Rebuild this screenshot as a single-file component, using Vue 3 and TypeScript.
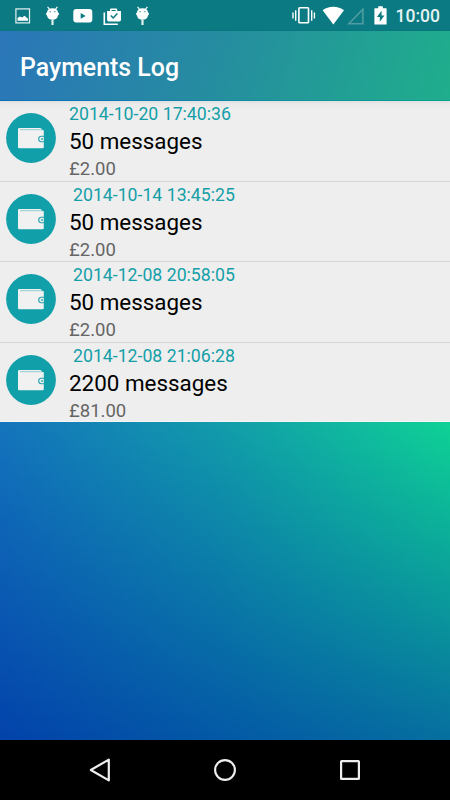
<script setup lang="ts">
interface Payment {
  date: string
  amount: string
  price: string
  indented: boolean
}

const payments: Payment[] = [
  { date: '2014-10-20 17:40:36', amount: '50 messages', price: '£2.00', indented: false },
  { date: '2014-10-14 13:45:25', amount: '50 messages', price: '£2.00', indented: true },
  { date: '2014-12-08 20:58:05', amount: '50 messages', price: '£2.00', indented: true },
  { date: '2014-12-08 21:06:28', amount: '2200 messages', price: '£81.00', indented: true },
]
</script>

<template>
  <div class="screen">
    <header class="status">
      <div class="notifications">
        <svg class="icon-photo" width="16" height="16" viewBox="0 0 16 16">
          <rect x=".9" y=".9" width="13.6" height="14" fill="none" stroke="#e4f1f1" stroke-width="1.2" />
          <path d="M2.5 12.8V10l2.4-1.6 2.2 1.2 2.3-1.8 3.6 3v2z" fill="#fff" />
        </svg>
        <svg class="icon-bug" width="16" height="20" viewBox="0 0 16 20">
          <path d="M2.6.8l2.1 2.7M12.4.8l-2.1 2.7" stroke="#fff" stroke-width="1.2" />
          <path d="M2 6.2Q2.6 2.3 7.5 2.3T13 6.2L14.2 8 13 9.4Q12.2 13.8 7.5 13.8T2 9.4L.8 8z" fill="#fff" />
          <circle cx="5.1" cy="5.7" r=".6" fill="#0c7a82" /><circle cx="9.9" cy="5.7" r=".6" fill="#0c7a82" />
          <rect x="6.4" y="13.6" width="2.2" height="5.4" fill="#e2f0f0" />
        </svg>
        <svg class="icon-video" width="20" height="16" viewBox="0 0 20 16">
          <rect x=".3" y=".9" width="19" height="13.6" rx="3" fill="#fff" />
          <path d="M7.7 5v5.8l5-2.9z" fill="#0c7a82" />
        </svg>
        <svg class="icon-store" width="20" height="18" viewBox="0 0 20 18">
          <path d="M1.3 4.5v11.8h13.5" fill="none" stroke="#fff" stroke-width="1.6" />
          <path d="M4.1 3.1H7V1.4Q7 .5 8 .5h5.2q1 0 1 .9v1.7H18v8.7q0 1.6-1.6 1.6H5.7q-1.6 0-1.6-1.6zM8.5 3.1h4.2V1.9H8.5z" fill="#fff" fill-rule="evenodd" />
          <path d="M7.8 7.5l2.4 2.5L14.4 5.6" fill="none" stroke="#0c7a82" stroke-width="1.5" />
        </svg>
        <svg class="icon-bug" width="16" height="20" viewBox="0 0 16 20">
          <path d="M2.6.8l2.1 2.7M12.4.8l-2.1 2.7" stroke="#fff" stroke-width="1.2" />
          <path d="M2 6.2Q2.6 2.3 7.5 2.3T13 6.2L14.2 8 13 9.4Q12.2 13.8 7.5 13.8T2 9.4L.8 8z" fill="#fff" />
          <circle cx="5.1" cy="5.7" r=".6" fill="#0c7a82" /><circle cx="9.9" cy="5.7" r=".6" fill="#0c7a82" />
          <rect x="6.4" y="13.6" width="2.2" height="5.4" fill="#e2f0f0" />
        </svg>
      </div>
      <div class="system">
        <svg width="24" height="20" viewBox="0 0 24 20">
          <rect x="6.9" y="2.8" width="9.6" height="15" rx=".8" fill="none" stroke="#fff" stroke-width="1.6" />
          <path d="M3.7 5.3v10.4M1 7.5v6M19.7 5.3v10.4M22.4 7.5v6" stroke="#fff" stroke-width="1.4" />
        </svg>
        <svg class="icon-wifi" width="24" height="20" viewBox="0 0 24 20">
          <path d="M.6 5.3Q5 1.8 11.3 1.8T22 5.3L11.3 19.4z" fill="#fff" />
        </svg>
        <svg class="icon-signal" width="18" height="20" viewBox="0 0 18 20">
          <path d="M1.8 18.7H15.9V4.2z" fill="none" stroke="#4f9da2" stroke-width="1.6" />
        </svg>
        <svg class="icon-battery" width="14" height="20" viewBox="0 0 14 20">
          <path d="M1 3.2h3.2V1.3h4.6v1.9H12q.6 0 .6.6v15.2q0 .6-.6.6H1q-.6 0-.6-.6V3.8q0-.6.6-.6z" fill="#fff" />
          <path d="M7.6 5.7L2.9 12h2.9v4.8l4.7-6.4H7.6z" fill="#0c7a82" />
        </svg>
        <span class="clock">10:00</span>
      </div>
    </header>

    <div class="toolbar"><h1>Payments Log</h1></div>

    <main class="content">
      <ul class="list">
        <li v-for="payment in payments" :key="payment.date" class="row">
          <svg class="wallet" width="50" height="50" viewBox="0 0 50 50">
            <circle cx="25" cy="25" r="24.9" fill="#119fa9" />
            <path d="M12 16.2q0-1.2 1.2-1.2H34q1.8 0 1.8 1.8l2 .5V34q0 1.2-1.2 1.2H13.2Q12 35.2 12 34z" fill="#f1f1f1" />
            <path d="M14 16.7h20.5q1 0 1 .8" fill="none" stroke="#79c4c8" stroke-width=".8" />
            <path d="M38 23.3h-2.6a2.7 2.7 0 0 0 0 5.4H38" fill="none" stroke="#25a4ac" stroke-width="1.1" />
            <circle cx="36" cy="26" r=".9" fill="#25a4ac" />
          </svg>
          <div class="details">
            <div class="date" :class="{ indented: payment.indented }">{{ payment.date }}</div>
            <div class="amount">{{ payment.amount }}</div>
            <div class="price">{{ payment.price }}</div>
          </div>
        </li>
      </ul>
      <div class="backdrop"></div>
    </main>

    <nav class="navbar">
      <svg width="24" height="26" viewBox="0 0 24 26">
        <path d="M2.8 13L20.8 2.6v20.8z" fill="none" stroke="#eee" stroke-width="2.2" stroke-linejoin="round" />
      </svg>
      <svg width="24" height="26" viewBox="0 0 24 26">
        <circle cx="12" cy="13" r="9.9" fill="none" stroke="#eee" stroke-width="2.1" />
      </svg>
      <svg width="24" height="26" viewBox="0 0 24 26">
        <rect x="3.1" y="4.1" width="17.8" height="17.8" rx=".5" fill="none" stroke="#eee" stroke-width="2.2" />
      </svg>
    </nav>
  </div>
</template>

<style>
body {
  margin: 0;
}
</style>

<style scoped>
.screen {
  width: 450px;
  height: 800px;
  display: flex;
  flex-direction: column;
  overflow: hidden;
  font-family: Roboto, sans-serif;
}
svg {
  display: block;
  flex: none;
}
.status {
  height: 31px;
  flex: none;
  box-sizing: border-box;
  display: flex;
  justify-content: space-between;
  background: linear-gradient(#0c7a82 29px, #08777c);
}
.notifications {
  display: flex;
  align-items: flex-start;
  padding: 6px 0 0 14.5px;
}
.icon-photo {
  margin-top: 2px;
}
.icon-bug {
  margin-left: 14.5px;
}
.icon-video {
  margin: 2px 0 0 12px;
}
.icon-store {
  margin: 2px -3px 0 10px;
}
.system {
  display: flex;
  align-items: flex-start;
  padding: 5px 10px 0 0;
}
.icon-wifi {
  margin-left: 6px;
}
.icon-signal {
  margin-left: 1px;
}
.icon-battery {
  margin: 0 8px 0 9px;
}
.clock {
  font-size: 17.5px;
  font-weight: 500;
  line-height: 23px;
  color: #e4f2f2;
}
.toolbar {
  height: 70px;
  flex: none;
  box-sizing: border-box;
  display: flex;
  align-items: center;
  padding: 5px 20px 0;
  background: linear-gradient(105deg, #2b76b9, #258e9f 50%, #1fae8c);
  border-bottom: 1px solid #147bb4;
  border-image: linear-gradient(90deg, #0b6db9, #108aaa 50%, #0aa191) 1;
}
h1 {
  margin: 0;
  font-size: 24.9px;
  font-weight: 500;
  line-height: 30px;
  color: #fff;
}
.content {
  flex: 1;
  display: flex;
  flex-direction: column;
}
.list {
  height: 321px;
  flex: none;
  margin: 0;
  padding: 0;
  list-style: none;
  display: grid;
  grid-template-rows: 81px 80px 81px 79px;
  background: linear-gradient(#dfdfdf, #eaeaea 3px, #eee 9px);
}
.row {
  display: flex;
  box-sizing: border-box;
  min-height: 0;
  border-bottom: 1px solid #d5d5d5;
}
.row:last-child {
  border-bottom-color: #f4f6f6;
}
.wallet {
  margin: 12.4px 13px 0 6px;
}
.details {
  white-space: nowrap;
}
.date {
  font-size: 17.7px;
  line-height: 26px;
  color: #149fa8;
}
.date.indented {
  padding-left: 4px;
}
.amount {
  font-size: 22.4px;
  line-height: 29px;
  color: #000;
}
.price {
  font-size: 18.5px;
  line-height: 26px;
  color: #656565;
}
.backdrop {
  flex: 1;
  position: relative;
  background: linear-gradient(90deg, #0343ab, #0459a6 50%, #076fa0);
}
.backdrop::before {
  content: '';
  position: absolute;
  inset: 0;
  background: linear-gradient(90deg, #1474bc, #129daa 50%, #0fd295);
  mask-image: linear-gradient(#000, transparent);
}
.navbar {
  height: 60px;
  flex: none;
  display: flex;
  justify-content: space-between;
  align-items: center;
  box-sizing: border-box;
  padding: 0 88px;
  background: #000;
}
</style>
